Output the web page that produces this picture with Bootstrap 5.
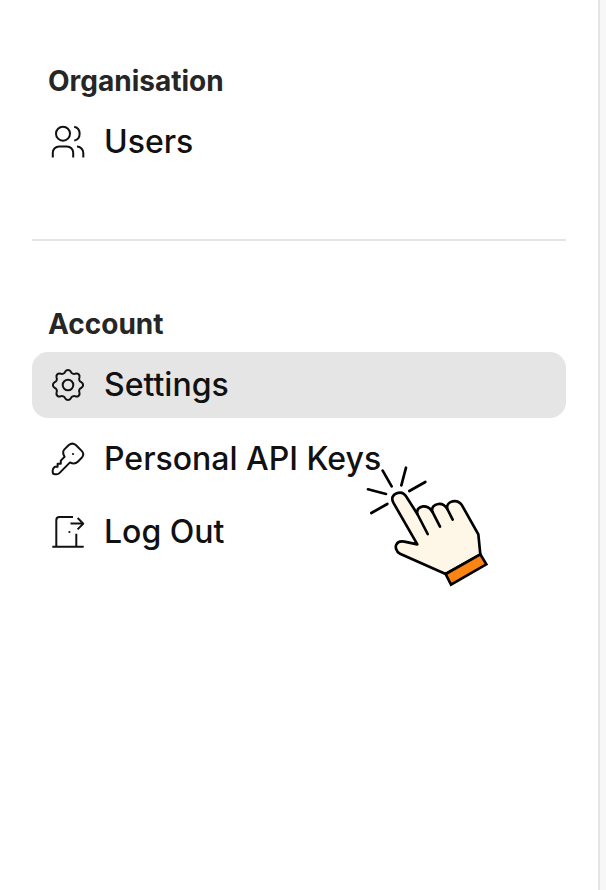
<!DOCTYPE html>
<html lang="en">
<head>
<meta charset="utf-8">
<title>Account menu</title>
<meta name="viewport" content="width=device-width, initial-scale=1">
<link href="https://cdn.jsdelivr.net/npm/bootstrap@5.3.0/dist/css/bootstrap.min.css" rel="stylesheet">
<style>
  body { font-family: Inter, "Liberation Sans", sans-serif; background: #f7f7f7; color: #111; overflow: hidden; }
  .side-panel { width: 600px; height: 890px; padding: 60px 32px 0; background: #fff; border-right: 2px solid #e5e5e5; }
  .group-title { height: 42px; margin: 0; padding-left: 16px; font-size: 28px; line-height: 42px; font-weight: 700; color: #262626; }
  .menu-list { gap: 7.5px; margin-top: 7px; }
  .menu-link { height: 66px; padding: 0 18px; gap: 18px; border-radius: 16px; font-size: 32px; line-height: 48px; font-weight: 500; color: #111; }
  .menu-link:hover { color: #111; }
  .menu-link.active { background: #e5e5e5; }
  .menu-link svg { width: 36px; height: 36px; flex: none; fill: none; stroke: #111; stroke-width: 2; stroke-linejoin: round; }
  .divider { height: 2px; margin: 64px 0 62px; background: #e5e5e5; }
  .pointer { left: 355px; top: 455px; width: 145px; height: 140px; pointer-events: none; }
</style>
<script src="https://cdn.jsdelivr.net/npm/bootstrap@5.3.0/dist/js/bootstrap.bundle.min.js"></script>
</head>
<body class="position-relative">
<aside class="side-panel">
  <h2 class="group-title">Organisation</h2>
  <nav class="menu-list d-flex flex-column">
    <a class="menu-link d-flex align-items-center text-decoration-none" href="#">
      <svg viewBox="0 0 36 36"><circle cx="13" cy="9.7" r="7"/><path d="M24.2 2.8a7.1 7.1 0 0 1 0 13.8M2.8 33.5v-4.8a6.3 6.3 0 0 1 6.3-6.3h7.8a6.3 6.3 0 0 1 6.3 6.3v4.8M27 22.6a6.4 6.4 0 0 1 6.3 6.4v4.5"/></svg>
      <span>Users</span>
    </a>
  </nav>
  <div class="divider"></div>
  <h2 class="group-title">Account</h2>
  <nav class="menu-list d-flex flex-column">
    <a class="menu-link active d-flex align-items-center text-decoration-none" href="#">
      <svg viewBox="0 0 36 36"><circle cx="18" cy="18" r="5.3"/><path d="M31.53 15.31A3.1 3.1 0 0 1 31.53 20.69A3.6 3.6 0 0 0 29.47 25.67A3.1 3.1 0 0 1 25.67 29.47A3.6 3.6 0 0 0 20.69 31.53A3.1 3.1 0 0 1 15.31 31.53A3.6 3.6 0 0 0 10.33 29.47A3.1 3.1 0 0 1 6.53 25.67A3.6 3.6 0 0 0 4.47 20.69A3.1 3.1 0 0 1 4.47 15.31A3.6 3.6 0 0 0 6.53 10.33A3.1 3.1 0 0 1 10.33 6.53A3.6 3.6 0 0 0 15.31 4.47A3.1 3.1 0 0 1 20.69 4.47A3.6 3.6 0 0 0 25.67 6.53A3.1 3.1 0 0 1 29.47 10.33A3.6 3.6 0 0 0 31.53 15.31Z"/></svg>
      <span>Settings</span>
    </a>
    <a class="menu-link d-flex align-items-center text-decoration-none" href="#">
      <svg viewBox="0 0 36 36"><path d="M14.6 15.8C12.8 12.8 12.7 10.2 14.4 8.4L18.8 4Q22.3 1.2 25.8 4L31.7 9.9Q34.9 13.2 31.7 16.8L27.8 20.7Q24.6 23.8 20 21.4L9.4 32.1Q8.2 33.3 6.6 33.3H5Q2.7 33.3 2.7 31V29.2Q2.7 27.4 4.8 25.7H7.6V22.8H10.8V19.6Z"/><circle cx="23" cy="13" r="1.1" fill="#111" stroke="none"/></svg>
      <span>Personal API Keys</span>
    </a>
    <a class="menu-link d-flex align-items-center text-decoration-none" href="#">
      <svg viewBox="0 0 36 36"><path d="M2.3 32.8H33.7M6.3 32.8V6.2Q6.3 3 9.5 3H23M26.3 19.7V32.8M20.5 9.6H33M27.6 4l5.7 5.6-5.7 5.8"/><circle cx="19.4" cy="18" r="1.1" fill="#111" stroke="none"/></svg>
      <span>Log Out</span>
    </a>
  </nav>
</aside>
<svg class="pointer position-absolute" viewBox="0 0 435 420" fill="none" stroke="#000" stroke-width="8" stroke-linecap="round" stroke-linejoin="round">
  <path fill="#fef6e7" d="M187 268L115 143C108 129 113 120 125 115C138 110 149 116 156 128L187 177C184 163 193 156 204 154C216 153 225 159 232 170C229 157 237 149 250 147C262 145 270 151 277 162C274 150 282 142 293 139C306 136 315 142 321 151L370 238L376 299L272 357L135 296C122 290 120 274 125 267C130 259 139 258 148 260Z"/>
  <path d="M187 177L218 237M232 170L255 215M277 162L293 194"/>
  <path d="M83 47L110 94M153 38L139 91M211 81L163 108M39 103L93 117M97 147L49 174"/>
  <path fill="#fb8413" stroke-linejoin="miter" d="M272 357L376 298L394 328L288 389Z"/>
</svg>
</body>
</html>
